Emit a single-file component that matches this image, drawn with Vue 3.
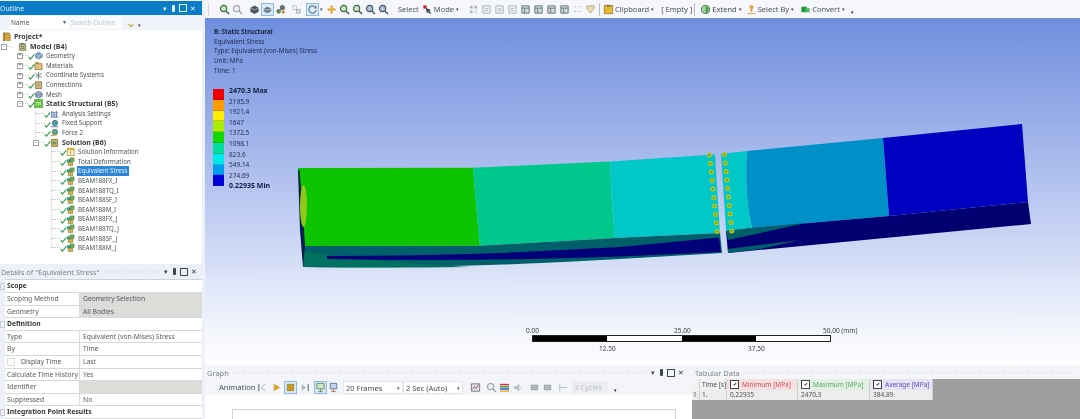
<script setup>
const icons = {
  mag: '<circle cx="5" cy="5" r="3.4" fill="#cfe3c8" stroke="#3f6b45" stroke-width="1.3"/><path d="M7.6 7.6 11 11" stroke="#3f5b45" stroke-width="1.6"/>',
  magGrey: '<circle cx="5" cy="5" r="3.4" fill="#eef0f2" stroke="#9aa3a8" stroke-width="1.2"/><path d="M7.6 7.6 11 11" stroke="#9aa3a8" stroke-width="1.5"/>',
  magDark: '<circle cx="5" cy="5" r="3.4" fill="#b7c4d8" stroke="#46586a" stroke-width="1.3"/><path d="M7.6 7.6 11 11" stroke="#46586a" stroke-width="1.6"/>',
  cube: '<path d="M6 1.5 10.5 4v4.5L6 11 1.5 8.500V4z" fill="#4a5560"/><path d="M1.500 4 6 6.500 10.500 4" stroke="#cfd6de" fill="none" stroke-width=".7"/>',
  cubeSel: '<path d="M2 5 6 3l4 2v3l-4 2-4-2z" fill="#6b7a88"/><path d="M2 5l4 2 4-2" stroke="#dfe6ee" fill="none" stroke-width=".7"/>',
  multi: '<circle cx="4" cy="8" r="2.500" fill="#5e8a5a"/><circle cx="8" cy="4" r="2.800" fill="#6a7078"/><circle cx="9" cy="9" r="1.600" fill="#c08a3a"/>',
  faces: '<path d="M2 2h4v4H2z" fill="none" stroke="#8a97a3" stroke-dasharray="1 1"/><path d="M6 6h4v4H6z" fill="#d8dee5" stroke="#8a97a3" stroke-width=".7"/>',
  rotate: '<path d="M9.500 4A4 4 0 1 0 10 6.500" fill="none" stroke="#6c7a86" stroke-width="1.300"/><path d="M10.500 1.800v3h-3z" fill="#6c7a86"/>',
  pan: '<path d="M6 1 8 3.400H7V5h1.600V4L11 6 8.600 8V7H7v1.600h1L6 11 4 8.600h1V7H3.400v1L1 6l2.400-2v1H5V3.400H4z" fill="#e2ab3a"/>',
  arrow: '<path d="M1.500 1.500h3.500v3.500H1.500z" fill="#c8202a"/><path d="M4 4l6 2.500-2 1 2 2.500-1 1-2.500-2.300-1 2z" fill="#39495a"/>',
  grid: '<path d="M2 2h3v3H2zM7 2h3v3H7zM2 7h3v3H2z" fill="#aab4bc"/><path d="M7 7h3v3H7z" fill="#d8dde2"/>',
  page: '<path d="M2 2h8v8H2z" fill="#eef1f2" stroke="#a2adb3" stroke-width=".9"/><path d="M4 5h4M4 7h4" stroke="#a2adb3" stroke-width=".8"/>',
  pageDark: '<path d="M2 2h8v8H2z" fill="#cfd8d6" stroke="#5f7775" stroke-width="1"/><path d="M2 4.500h8M5 4.500V10" stroke="#5f7775" stroke-width=".9"/>',
  faint: '<path d="M2 3h3M7 3h3M2 8h3M7 8h3" stroke="#c8ced2" stroke-width="1.200"/>',
  shield: '<path d="M2 2h8v3l-4 5-4-5z" fill="#f0d9a8" stroke="#a8a090" stroke-width=".8"/>',
  clip: '<path d="M1.500 1.500h9v9h-9z" fill="#e8b830" stroke="#8c6c20" stroke-width=".8"/><path d="M4 1.500h4v1.500H4z" fill="#7c6a3a"/>',
  extend: '<circle cx="6" cy="6" r="4.400" fill="#a8d8a0" stroke="#4a6a5a" stroke-width="1"/><path d="M6 2.500a3.500 3.500 0 0 1 0 7" fill="#4f9f58"/>',
  selBy: '<circle cx="6" cy="3.500" r="2.300" fill="#e6a84a"/><path d="M5 5.500h2v3H5z" fill="#d89a44"/><path d="M1.500 10.500h9" stroke="#d8b040" stroke-width="1.200"/>',
  convert: '<path d="M1.500 3h6v6h-6z" fill="#1f9a3a"/><path d="M6 4.500h4.500v4.500H6z" fill="#4ec060"/>',
  first: '<path d="M2 2v8" stroke="#6a7480" stroke-width="1.200"/><path d="M9 2.500 4.500 6 9 9.500" fill="none" stroke="#a8b0b8" stroke-width="1"/>',
  play: '<path d="M3 2l7 4-7 4z" fill="#e0a028"/>',
  stop: '<path d="M2.500 2.500h7v7h-7z" fill="#c89a20" stroke="#8a7020" stroke-width=".7"/>',
  last: '<path d="M10 2v8" stroke="#6a7480" stroke-width="1.200"/><path d="M3 2.500 7.500 6 3 9.500z" fill="#a8b0b8"/>',
  bars: '<path d="M2 1.500h8v6H2z" fill="#cfe6c8" stroke="#4f8a50" stroke-width=".9"/><path d="M6 7.500v3M3.500 10.500h5" stroke="#4f8a50" stroke-width=".9"/>',
  barsRed: '<path d="M2.500 1.500h7v6h-7z" fill="#c8d4ea" stroke="#4a6a9a" stroke-width=".9"/><path d="M6 7.500v3M3.500 10.500h5" stroke="#b8603a" stroke-width="1"/>',
  chart: '<path d="M1.500 2h9v8h-9z" fill="#dce0e8" stroke="#667" stroke-width=".9"/><path d="M3 8l2-3 2 2 2-4" fill="none" stroke="#b04048" stroke-width=".9"/>',
  rainbow: '<path d="M1 2h10v1.600H1z" fill="#d8303a"/><path d="M1 4.400h10V6H1z" fill="#38a048"/><path d="M1 6.800h10v1.600H1z" fill="#3050c8"/><path d="M1 9.200h10v1.600H1z" fill="#e8b830"/>',
  sound: '<path d="M2 4.500h2.500L8 2v8L4.500 7.500H2z" fill="#b6bcc2"/><path d="M9 4l2 2-2 2" fill="#ccd0d4"/>',
  film: '<path d="M2 3h8v6H2z" fill="#9aa2aa"/><path d="M3 5h6M3 7h6" stroke="#dfe3e6" stroke-width=".7"/>',
  cycles: '<path d="M3 2v8M3 6h7" stroke="#b5babf" stroke-width="1"/>',
  book: '<path d="M1.500 1h6.500l1 1v8.500H1.500z" fill="#d9a63a" stroke="#7b6226" stroke-width=".7"/><path d="M3 1v9" stroke="#8e7028" stroke-width=".7"/>',
  model: '<path d="M1.500 2h7v8h-7z" fill="#c3ba7d" stroke="#5e6458" stroke-width=".8"/><path d="M3 1h4v2H3z" fill="#6f7f72"/><path d="M3 5h4M3 7h4" stroke="#5e6458" stroke-width=".8"/>',
  geometry: '<path d="M1.500 3.500 5 1.500 9 3.500v3.500L5 9 1.500 7z" fill="#7f9ecb" stroke="#53688e" stroke-width=".7"/><path d="M1.500 3.500 5 5.500 9 3.500M5 5.500V9" stroke="#dfe8f4" fill="none" stroke-width=".5"/>',
  materials: '<path d="M1 3h8v6.500H1z" fill="#e3c27a" stroke="#8a6c32" stroke-width=".8"/><path d="M2 1h3l1 2H1z" fill="#b48d42"/>',
  coords: '<path d="M5 1v8" stroke="#3f9f5a" stroke-width="1"/><path d="M1.500 3 8.500 7" stroke="#c0504a" stroke-width="1"/><path d="M1.500 7 8.500 3" stroke="#5a7fc0" stroke-width="1"/>',
  conn: '<path d="M1.500 2h7v7.500h-7z" fill="#d7b66a" stroke="#7a6636" stroke-width=".8"/><circle cx="5" cy="5.500" r="1.800" fill="#9ca7b3"/>',
  mesh: '<path d="M1.500 3.500 5 1.500 9 3.500v3.500L5 9 1.500 7z" fill="#9fb2d4" stroke="#566a8c" stroke-width=".8"/><path d="M3 2.500v5.500M7 2.500v5.500M1.500 5.200H9" stroke="#566a8c" stroke-width=".4"/>',
  structural: '<path d="M.5 .5h9v9h-9z" fill="#5fc43c" stroke="#3a8a28" stroke-width=".6"/><path d="M2 4h6M3 4v3M5 4v3M7 4v3" stroke="#e8f4d0" stroke-width=".8"/>',
  settings: '<path d="M1 9h8M2 9V2M4.500 9V3M7 9V2" stroke="#4f6ca0" stroke-width="1"/><path d="M1 4h8M1 6.500h8" stroke="#4f6ca0" stroke-width=".6"/>',
  support: '<circle cx="5.500" cy="4.500" r="3" fill="#4f9faa" stroke="#2c6a70" stroke-width=".7"/><path d="M1 8.500h8" stroke="#7b8a8f" stroke-width="1.200"/>',
  force: '<circle cx="5.500" cy="4.500" r="3" fill="#62a88a" stroke="#2c6a60" stroke-width=".7"/><path d="M1 8.500l7-1" stroke="#c0a040" stroke-width="1.200"/>',
  solution: '<path d="M1.500 1.500h7v8h-7z" fill="#d6b24a" stroke="#6e6a30" stroke-width=".8"/><path d="M3 4h4v3H3z" fill="#4e9f78"/>',
  info: '<path d="M1.500 1.500h7.500v8H1.500z" fill="#fbf3cf" stroke="#b8963a" stroke-width=".9"/><path d="M1.500 1.500h7.500v2H1.500z" fill="#d9b040"/><path d="M5.200 4.500v3.500" stroke="#a07a28" stroke-width=".9"/>',
  result: '<path d="M1 2.500h4.500v3.500H1z" fill="#3f9f8a"/><path d="M4.500 1h4.500v4H4.500z" fill="#6cb24a" stroke="#3c6a4a" stroke-width=".5"/><path d="M2.500 5.500h5v4h-5z" fill="#d9b040" stroke="#4c6a4a" stroke-width=".5"/>',
}

const tree = [
  { label: 'Project*', lv: 0, bold: true, icon: 'book' },
  { label: 'Model (B4)', lv: 1, bold: true, icon: 'model', box: '-' },
  { label: 'Geometry', lv: 2, icon: 'geometry', box: '+', ok: true },
  { label: 'Materials', lv: 2, icon: 'materials', box: '+', ok: true },
  { label: 'Coordinate Systems', lv: 2, icon: 'coords', box: '+', ok: true },
  { label: 'Connections', lv: 2, icon: 'conn', box: '+', ok: true },
  { label: 'Mesh', lv: 2, icon: 'mesh', box: '+', ok: true },
  { label: 'Static Structural (B5)', lv: 2, bold: true, icon: 'structural', box: '-', ok: true },
  { label: 'Analysis Settings', lv: 3, icon: 'settings', ok: true },
  { label: 'Fixed Support', lv: 3, icon: 'support', ok: true },
  { label: 'Force 2', lv: 3, icon: 'force', ok: true },
  { label: 'Solution (B6)', lv: 3, bold: true, icon: 'solution', box: '-', ok: true },
  { label: 'Solution Information', lv: 4, icon: 'info', ok: true },
  { label: 'Total Deformation', lv: 4, icon: 'result', ok: true },
  { label: 'Equivalent Stress', lv: 4, icon: 'result', ok: true, selected: true },
  ...['BEAM188FX_I', 'BEAM188TQ_I', 'BEAM188SF_I', 'BEAM188M_I', 'BEAM188FX_J', 'BEAM188TQ_J', 'BEAM188SF_J', 'BEAM188M_J'].map((label) => ({ label, lv: 4, icon: 'result', ok: true })),
]

const details = [
  { head: 'Scope' },
  { k: 'Scoping Method', v: 'Geometry Selection', ro: true },
  { k: 'Geometry', v: 'All Bodies', ro: true },
  { head: 'Definition' },
  { k: 'Type', v: 'Equivalent (von-Mises) Stress' },
  { k: 'By', v: 'Time' },
  { k: 'Display Time', v: 'Last', check: true },
  { k: 'Calculate Time History', v: 'Yes' },
  { k: 'Identifier', v: '', ro: true },
  { k: 'Suppressed', v: 'No' },
  { head: 'Integration Point Results' },
]

const legendColors = ['#f00000', '#ff9c00', '#ffee00', '#a8f000', '#10d800', '#00e09c', '#00e8e8', '#009cf0', '#0000d8']
const legendLabels = ['2470.3 Max', '2195.9', '1921.4', '1647', '1372.5', '1098.1', '823.6', '549.14', '274.69', '0.22935 Min']

// bolts along both sides of the cut
const boltsLeft = Array.from({ length: 10 }, (_, i) => ({ x: 709.500 + i * 0.85, y: 155 + i * 8.500 }))
const boltsRight = Array.from({ length: 10 }, (_, i) => ({ x: 724.500 + i * 0.8, y: 154.500 + i * 8.500 }))
const bolts = [...boltsLeft, ...boltsRight]
</script>

<template>
  <div class="app">
    <aside class="left">
      <section class="outline">
        <header class="title active">
          <span>Outline</span>
          <span class="win"><i>▾</i><i class="pin"></i><i class="sq"></i><i>✕</i></span>
        </header>
        <div class="outline-tools">
          <span class="combo">Name<i>▾</i></span>
          <span class="search">Search Outline</span>
          <span class="chev">⌄</span>
          <span class="more">▾</span>
        </div>
        <div class="tree">
          <span class="vline v1"></span>
          <span class="vline v2"></span>
          <span class="vline v3"></span>
          <span class="vline v4"></span>
          <div v-for="r in tree" :key="r.label" class="row" :style="{ paddingLeft: (r.lv ? 16 * r.lv - 15 : 2) + 'px' }">
            <span v-if="r.lv" class="lead">
              <span class="hline"></span>
              <span v-if="r.box" class="box">{{ r.box }}</span>
              <svg v-if="r.ok" class="tick" viewBox="0 0 8 8"><path d="M.8 4.800 2.800 7 7.200 1.500" fill="none" stroke="#2e9f4a" stroke-width="1.200" /></svg>
            </span>
            <svg class="ti" viewBox="0 0 10 10" v-html="icons[r.icon]"></svg>
            <span class="label" :class="{ bold: r.bold, selected: r.selected }">{{ r.label }}</span>
          </div>
        </div>
      </section>
      <section class="details">
        <header class="title">
          <span class="details-name">Details of "Equivalent Stress"</span>
          <span class="rule"></span>
          <span class="win dark"><i>▾</i><i class="pin"></i><i class="sq"></i><i>✕</i></span>
        </header>
        <div class="grid">
          <template v-for="d in details" :key="d.head || d.k">
            <div v-if="d.head" class="dhead"><span class="fold"></span>{{ d.head }}</div>
            <div v-else class="drow">
              <span class="dk" :class="{ indent: d.check }"><i v-if="d.check" class="cb"></i>{{ d.k }}</span>
              <span class="dv" :class="{ ro: d.ro }">{{ d.v }}</span>
            </div>
          </template>
        </div>
      </section>
    </aside>

    <main class="right">
      <div class="toolbar">
        <span class="grip"></span>
        <span class="grp g1">
          <svg class="ic" viewBox="0 0 12 12" v-html="icons.mag"></svg>
          <svg class="ic" viewBox="0 0 12 12" v-html="icons.magGrey"></svg>
        </span>
        <span class="grp g2">
          <svg class="ic" viewBox="0 0 12 12" v-html="icons.cube"></svg>
          <svg class="ic on" viewBox="0 0 12 12" v-html="icons.cubeSel"></svg>
          <svg class="ic" viewBox="0 0 12 12" v-html="icons.multi"></svg>
        </span>
        <span class="grp g3">
          <svg class="ic" viewBox="0 0 12 12" v-html="icons.faces"></svg>
        </span>
        <span class="grp g3">
          <svg class="ic on" viewBox="0 0 12 12" v-html="icons.rotate"></svg><i class="dd">▾</i>
          <svg class="ic g-pan" viewBox="0 0 12 12" v-html="icons.pan"></svg>
          <svg class="ic" viewBox="0 0 12 12" v-html="icons.mag"></svg>
          <svg class="ic" viewBox="0 0 12 12" v-html="icons.mag"></svg>
          <svg class="ic" viewBox="0 0 12 12" v-html="icons.magDark"></svg>
          <svg class="ic" viewBox="0 0 12 12" v-html="icons.magDark"></svg>
        </span>
        <span class="tx t-select">Select</span>
        <svg class="ic" viewBox="0 0 12 12" v-html="icons.arrow"></svg>
        <span class="tx">Mode<i class="dd">▾</i></span>
        <span class="grp g-sel">
          <svg v-for="(k, i) in ['grid', 'page', 'page', 'page', 'pageDark', 'pageDark', 'pageDark', 'pageDark', 'faint', 'shield']" :key="i" class="ic" viewBox="0 0 12 12" v-html="icons[k]"></svg>
        </span>
        <span class="sep"></span>
        <svg class="ic" viewBox="0 0 12 12" v-html="icons.clip"></svg>
        <span class="tx">Clipboard<i class="dd">▾</i></span>
        <span class="tx t-empty">[ Empty ]</span>
        <span class="sep sep-wide"></span>
        <svg class="ic" viewBox="0 0 12 12" v-html="icons.extend"></svg>
        <span class="tx">Extend<i class="dd">▾</i></span>
        <svg class="ic t-gap" viewBox="0 0 12 12" v-html="icons.selBy"></svg>
        <span class="tx">Select By<i class="dd">▾</i></span>
        <svg class="ic t-gap2" viewBox="0 0 12 12" v-html="icons.convert"></svg>
        <span class="tx">Convert<i class="dd">▾</i></span>
        <i class="dd last">▾</i>
      </div>

      <div class="viewport">
        <svg class="model-svg" viewBox="205 18 875 347">
          <path d="M298 168 473 167.700Q476 205 480 245.700L303 246Z" fill="#0cc400" />
          <path d="M473 167.700 610 161.500Q611 200 615 238L480 245.700Q476 205 473 167.700Z" fill="#00c88c" />
          <path d="M610 161.500 715 154.500 720 233 615 238Q611 200 610 161.500Z" fill="#00c8c8" />
          <path d="M721 154 747 151Q744 195 752 228L726 231Z" fill="#00c8c8" />
          <path d="M747 151 883 138 889 216 752 228Q744 195 747 151Z" fill="#0090c8" />
          <path d="M883 138 1022 124 1028 202 889 216Z" fill="#0000c0" />
          <path d="M303 246 480 245.700 615 238 720 233 722 253 620 259Q450 269 303 267Z" fill="#00606a" />
          <path d="M303 252Q320 252 335 257 420 264 470 267 380 268 303 267Z" fill="#00705f" />
          <path d="M327 256Q420 256 500 253L620 247 719 237.500 721 252 620 256.500Q470 262 327 259Z" fill="#000078" />
          <path d="M726 231 752 228 889 216 1028 202 1031 224 728 253Z" fill="#000070" />
          <path d="M726 231 752 228 806 223 728 240Z" fill="#00606a" />
          <path d="M728 253 728 249 800 240 760 249Z" fill="#00606a" />
          <path d="M298 170 299.500 170Q303 210 305 246L303 267 300 230Z" fill="#00204c" />
          <ellipse cx="303.500" cy="206" rx="3.500" ry="21" fill="#90c818" />
          <g v-for="(b, i) in bolts" :key="i">
            <circle :cx="b.x" :cy="b.y" r="2.500" fill="#c8c410" />
            <circle :cx="b.x" :cy="b.y" r="1.200" fill="#58b038" />
          </g>
        </svg>

        <div class="caption">
          <b>B: Static Structural</b>
          <span>Equivalent Stress</span>
          <span>Type: Equivalent (von-Mises) Stress</span>
          <span>Unit: MPa</span>
          <span>Time: 1</span>
        </div>

        <div class="legend">
          <div class="swatches">
            <i v-for="c in legendColors" :key="c" :style="{ background: c }"></i>
          </div>
          <div class="ticks">
            <span v-for="(l, i) in legendLabels" :key="l" :class="{ strong: i === 0 || i === 9 }">{{ l }}</span>
          </div>
        </div>

        <div class="scale">
          <div class="scale-top"><span>0.00</span><span>25.00</span><span>50.00 (mm)</span></div>
          <div class="scale-bar"><i></i><i></i><i></i><i></i></div>
          <div class="scale-bottom"><span>12.50</span><span>37.50</span></div>
        </div>
      </div>

      <div class="bottom">
        <section class="graph">
          <header class="title plain">
            <span>Graph</span>
            <span class="rule"></span>
            <span class="win dark"><i>▾</i><i class="pin"></i><i class="sq"></i><i>✕</i></span>
          </header>
          <div class="graph-tools">
            <span class="tx anim">Animation</span>
            <span class="player">
              <svg class="ic" viewBox="0 0 12 12" v-html="icons.first"></svg>
              <svg class="ic" viewBox="0 0 12 12" v-html="icons.play"></svg>
              <svg class="ic on" viewBox="0 0 12 12" v-html="icons.stop"></svg>
              <svg class="ic" viewBox="0 0 12 12" v-html="icons.last"></svg>
            </span>
            <svg class="ic on m3" viewBox="0 0 12 12" v-html="icons.bars"></svg>
            <svg class="ic" viewBox="0 0 12 12" v-html="icons.barsRed"></svg>
            <span class="sel first">20 Frames<i>▾</i></span>
            <span class="sel">2 Sec (Auto)<i>▾</i></span>
            <svg class="ic m5" viewBox="0 0 12 12" v-html="icons.chart"></svg>
            <svg class="ic m3" viewBox="0 0 12 12" v-html="icons.magGrey"></svg>
            <svg class="ic" viewBox="0 0 12 12" v-html="icons.rainbow"></svg>
            <svg class="ic" viewBox="0 0 12 12" v-html="icons.sound"></svg>
            <svg class="ic m4" viewBox="0 0 12 12" v-html="icons.film"></svg>
            <svg class="ic" viewBox="0 0 12 12" v-html="icons.film"></svg>
            <svg class="ic m2" viewBox="0 0 12 12" v-html="icons.cycles"></svg>
            <span class="cycles">3 Cycles</span>
            <i class="dd last">▾</i>
          </div>
          <div class="plot"><div class="plot-frame"></div></div>
        </section>
        <section class="tabular">
          <header class="title plain">
            <span>Tabular Data</span>
            <span class="rule"></span>
          </header>
          <div class="table-area">
            <div class="t-row t-head">
              <span class="c0"></span>
              <span class="c1">Time [s]</span>
              <span class="c2 min"><i class="chk">✔</i>Minimum [MPa]</span>
              <span class="c3 max"><i class="chk">✔</i>Maximum [MPa]</span>
              <span class="c4 avg"><i class="chk">✔</i>Average [MPa]</span>
            </div>
            <div class="t-row">
              <span class="c0">1</span>
              <span class="c1">1.</span>
              <span class="c2">0.22935</span>
              <span class="c3">2470.3</span>
              <span class="c4">384.89</span>
            </div>
          </div>
        </section>
      </div>
    </main>
  </div>
</template>

<style>
html, body { margin: 0; background: #fff; overflow: hidden; }
</style>

<style scoped>
.app {
  width: 1080px;
  height: 419px;
  display: grid;
  grid-template-columns: 205px 875px;
  font: 7.500px "Noto Sans", "Liberation Sans", sans-serif;
  color: #3a3f45;
  overflow: hidden;
  filter: blur(0.35px);
  background: #edf0f8;
}
i { font-style: normal; }

.left { display: flex; flex-direction: column; height: 419px; }
.outline { height: 267px; display: flex; flex-direction: column; }
.title {
  height: 13px;
  display: flex;
  align-items: center;
  gap: 4px;
  padding: 0 8px 0 1px;
  font-size: 7.500px;
  color: #7b828c;
  flex: none;
}
.title.active { background: #0b7cc6; color: #e3f1fb; margin: 1px 3px 0 0; height: 14px; justify-content: space-between; padding: 0 6px 0 0; font-size: 7px; }
.details-name { font-size: 7.300px; white-space: nowrap; }
.title .rule {
  flex: 1;
  height: 3px;
  background: repeating-linear-gradient(90deg, #dfe2ea 0 1px, transparent 1px 3px);
}
.win { display: flex; align-items: center; gap: 3px; font-size: 7px; }
.win i { width: 6px; text-align: center; display: block; }
.win .pin { width: 3px; height: 7px; background: currentColor; border-radius: 1px; margin: 0 1px; }
.win .sq { height: 6px; width: 6px; border: 1px solid currentColor; }
.win.dark { color: #3f454c; }

.outline-tools {
  height: 15px;
  flex: none;
  display: flex;
  align-items: center;
  margin-right: 3px;
  padding-left: 10px;
  background: #f1f3fa;
  font-size: 6.500px;
}
.combo { width: 59px; height: 13px; line-height: 13px; background: #fff; display: flex; justify-content: space-between; padding-left: 1px; box-sizing: border-box; padding-right: 3px; color: #555; }
.combo i { font-size: 6px; }
.search { margin-left: 2px; width: 51px; height: 13px; line-height: 13px; background: #fafbfd; color: #c0c4c8; white-space: nowrap; overflow: hidden; }
.chev { margin-left: 4px; color: #c6bb50; font-size: 12px; font-weight: 700; line-height: 8px; }
.more { margin-left: 2px; font-size: 5px; color: #333; padding-top: 5px; }

.tree {
  position: relative;
  flex: 1;
  margin-right: 3px;
  background: #fff;
  padding-top: 2px;
}
.row {
  height: 9.600px;
  display: flex;
  align-items: center;
  white-space: nowrap;
}
.lead { width: 17px; height: 9px; position: relative; flex: none; }
.hline { position: absolute; left: 3px; right: 6px; top: 4px; border-top: 1px dotted #c2c8ce; }
.box {
  position: absolute;
  left: 0;
  top: 2px;
  width: 4px;
  height: 4px;
  line-height: 3.500px;
  border: 1px solid #9ca3aa;
  background: #fff;
  font-size: 6px;
  text-align: center;
  color: #555;
}
.tick { position: absolute; left: 11px; top: 2px; width: 7px; height: 7px; z-index: 1; }
.ti { width: 9px; height: 9px; flex: none; }
.label { margin-left: 2px; padding: 0 1px; line-height: 9.500px; color: #4c5258; font-size: 6.200px; }
.label.bold { font-weight: 700; color: #34383e; font-size: 7px; }
.label.selected { background: #2c85d6; color: #e8f2fb; }
.vline { position: absolute; width: 0; border-left: 1px dotted #c6ccd2; }
.v1 { left: 3px; top: 11px; height: 6px; }
.v2 { left: 19px; top: 20px; height: 54px; }
.v3 { left: 35px; top: 78px; height: 33px; }
.v4 { left: 51px; top: 116px; height: 102px; }

.details { flex: 1; display: flex; flex-direction: column; padding-top: 1px; }
.grid { margin: 1px 3px 0 5px; background: #fff; border-top: 1px solid #cfd2d6; font-size: 6.750px; }
.dhead, .drow { height: 12.600px; box-sizing: border-box; border-bottom: 1px solid #d6d8da; white-space: nowrap; }
.dhead { line-height: 11.500px; font-weight: 700; padding-left: 2px; color: #33373c; position: relative; }
.fold { position: absolute; left: -5px; top: 3px; width: 3px; height: 5px; border: 1px solid #c6c9cd; }
.drow { display: grid; grid-template-columns: 75px 1fr; line-height: 11.500px; }
.dk { padding-left: 2px; border-right: 1px solid #d6d8da; color: #555a60; }
.dk.indent { padding-left: 2px; display: flex; align-items: center; gap: 6px; }
.cb { width: 6px; height: 6px; border: 1px solid #ddd; display: block; }
.dv { padding-left: 3px; color: #555a60; }
.dv.ro { background: #dcdcd8; }

.right { display: flex; flex-direction: column; height: 419px; min-width: 0; }
.toolbar {
  height: 18px;
  flex: none;
  display: flex;
  align-items: center;
  background: #f6f7fb;
  white-space: nowrap;
}
.grip { width: 1px; height: 13px; background: #d8dbe0; margin: 0 9px 0 3px; }
.grp { display: flex; align-items: center; }
.ic { width: 11px; height: 11px; padding: 1px; flex: none; display: block; }
.ic.on { outline: 1px solid #8fbce6; outline-offset: -1px; background: #dbe9f6; }
.g2 { margin-left: 4px; }
.g3 { margin-left: 3px; }
.g-pan { margin-left: 2px; }
.g-sel { margin-left: 8px; }
.dd { font-size: 5px; color: #444; margin-left: 1px; }
.tx { color: #4a5058; display: flex; align-items: center; gap: 1px; font-size: 7.500px; }
.t-select { margin: 0 2px 0 8px; }
.t-empty { margin-left: 7px; }
.t-gap { margin-left: 3px; }
.t-gap2 { margin-left: 5px; }
.sep { width: 1px; height: 13px; background: #b8bcc2; margin: 0 2px; flex: none; }
.sep-wide { margin-right: 4px; }
.last { margin-left: 6px; color: #222; padding-top: 5px; }

.viewport {
  position: relative;
  height: 347px;
  flex: none;
  overflow: hidden;
  background: linear-gradient(180deg, #6e8edd 0%, #9aafe9 30%, #c5d1f3 60%, #f4f6fd 90%, #fdfdff 100%);
}
.model-svg { position: absolute; inset: 0; width: 875px; height: 347px; }
.caption {
  position: absolute;
  left: 9px;
  top: 9px;
  display: flex;
  flex-direction: column;
  line-height: 9.700px;
  color: #1f2c4e;
  font-size: 6.300px;
}
.caption b { color: #182240; }
.legend { position: absolute; left: 8px; top: 71px; display: flex; gap: 5px; }
.swatches { display: flex; flex-direction: column; width: 11px; }
.swatches i { height: 10.800px; display: block; box-sizing: border-box; border-bottom: 1px solid rgba(40, 50, 90, .25); }
.ticks { display: flex; flex-direction: column; margin-top: -3px; color: #1f2c4e; font-size: 6.500px; }
.ticks span { height: 10.600px; line-height: 10.600px; }
.ticks .strong { font-weight: 700; color: #141e3c; font-size: 7px; }

.scale { position: absolute; left: 327px; top: 309px; width: 299px; font-size: 6.500px; color: #3c4046; }
.scale-top { position: relative; height: 8px; }
.scale-top span { position: absolute; top: 0; line-height: 8px; white-space: nowrap; }
.scale-top span:nth-child(1) { left: -6px; }
.scale-top span:nth-child(2) { left: 142px; }
.scale-top span:nth-child(3) { left: 291px; }
.scale-bar { display: flex; height: 7px; border: 1px solid #222; box-sizing: border-box; }
.scale-bar i { flex: 1; background: #fff; }
.scale-bar i:nth-child(odd) { background: #000; }
.scale-bottom { position: relative; height: 10px; }
.scale-bottom span { position: absolute; top: 2px; }
.scale-bottom span:nth-child(1) { left: 67px; }
.scale-bottom span:nth-child(2) { left: 216px; }

.bottom { flex: 1; display: grid; grid-template-columns: 487px 1fr; min-height: 0; background: #f4f5f9; }
.title.plain { padding: 0 8px 0 2px; margin-top: 1px; }
.graph { display: flex; flex-direction: column; min-height: 0; }
.graph-tools { height: 16px; flex: none; display: flex; align-items: center; padding-left: 14px; white-space: nowrap; }
.anim { width: 36.500px; }
.player { display: flex; gap: 1px; }
.m2 { margin-left: 2px; }
.m3 { margin-left: 3px; }
.m4 { margin-left: 4px; }
.m5 { margin-left: 5.500px; }
.sel { width: 60px; height: 13px; line-height: 12px; background: #fff; border: 1px solid #e3e5ea; box-sizing: border-box; display: flex; justify-content: space-between; padding: 0 2px; color: #4a5058; }
.sel.first { margin-left: 3.500px; }
.sel i { font-size: 5px; }
.cycles { margin-left: 3.500px; width: 36px; height: 13px; line-height: 13px; background: #eceef2; color: #bcc0c4; padding-left: 2px; box-sizing: border-box; }
.plot { flex: 1; background: #fff; padding: 14px 16px 0 27px; }
.plot-frame { border: 1px solid #cfd2d6; height: 40px; }

.tabular { display: flex; flex-direction: column; min-height: 0; }
.tabular .title { padding-left: 3px; }
.table-area { flex: 1; background: #9f9f9f; }
.t-row { display: grid; grid-template-columns: 8px 27px 71px 72px 63px; width: 241px; height: 10px; line-height: 10px; background: #ededeb; font-size: 6.500px; color: #4b5056; }
.t-head { height: 11px; background: #f2f2f2; }
.t-row span { padding-left: 3px; border-right: 1px solid #d0d0d0; white-space: nowrap; overflow: hidden; display: flex; align-items: center; gap: 2px; }
.c0 { padding-left: 1px !important; }
.c1 { padding-left: 2px !important; }
.chk { width: 7px; height: 7px; border: 1px solid #444; background: #fff; font-size: 5px; line-height: 7px; text-align: center; color: #111; flex: none; margin-right: 1px; }
.min { background: #f6dfe0; color: #c8505a; }
.max { background: #e2f1e1; color: #5aa868; }
.avg { background: #e6e4f5; color: #5850c0; }
</style>
